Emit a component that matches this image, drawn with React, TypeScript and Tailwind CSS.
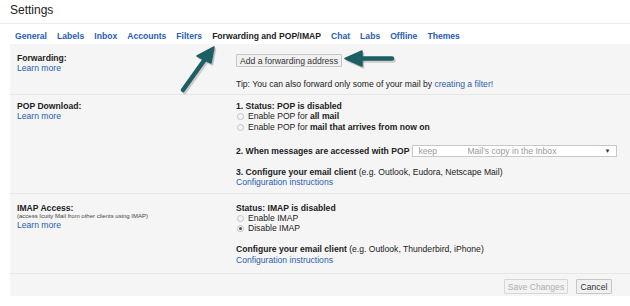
import React from "react";

const Radio = ({ checked = false }: { checked?: boolean }) => (
  <span className="inline-flex items-center justify-center w-[7px] h-[7px] rounded-full border border-[#c4c4c4] bg-[#f4f4f4] mr-[4px] ml-[1px] shrink-0">
    {checked && <span className="w-[3px] h-[3px] rounded-full bg-[#555]" />}
  </span>
);

const Link = ({ children }: { children: React.ReactNode }) => (
  <span className="text-[#2a5db0]">{children}</span>
);

export default function App() {
  const tabs = ["General", "Labels", "Inbox", "Accounts", "Filters", "Forwarding and POP/IMAP", "Chat", "Labs", "Offline", "Themes"];
  return (
    <div
      className="relative w-[630px] h-[306px] bg-white overflow-hidden text-[#222] text-[8.6px] leading-[10px]"
      style={{ fontFamily: '"Liberation Sans", Arial, sans-serif' }}
    >
      <div className="h-[24px] border-b border-[#ebebeb] pl-[10px] flex items-center">
        <span className="text-[12px] text-[#222] leading-[14px] -mt-[3px]">Settings</span>
      </div>
      <div className="flex h-[20px] items-end pb-[3px] pl-[10px] font-bold">
        {tabs.map((t) => (
          <span
            key={t}
            className={
              "px-[5px] " + (t === "Forwarding and POP/IMAP" ? "text-[#222]" : "text-[#2a5db0]")
            }
          >
            {t}
          </span>
        ))}
      </div>
      <div className="ml-[10px] bg-[#f5f5f5] flex flex-col">
        {/* Forwarding */}
        <div className="grid grid-cols-[219px_1fr] pl-[7px] pt-[9px] pb-[5px] border-b border-[#e6e6e6]">
          <div className="flex flex-col">
            <span className="font-bold">Forwarding:</span>
            <Link>Learn more</Link>
          </div>
          <div className="flex flex-col items-start">
            <span className="mt-[1px] h-[13px] px-[3px] border border-[#c6c6c6] bg-[#f1f1f1] text-[#333] flex items-center rounded-[1px]">
              Add a forwarding address
            </span>
            <span className="mt-[12px]">
              Tip: You can also forward only some of your mail by <Link>creating a filter!</Link>
            </span>
          </div>
        </div>
        {/* POP */}
        <div className="grid grid-cols-[219px_1fr] pl-[7px] pt-[6px] pb-[5px] border-b border-[#e6e6e6]">
          <div className="flex flex-col">
            <span className="font-bold">POP Download:</span>
            <Link>Learn more</Link>
          </div>
          <div className="flex flex-col items-start">
            <span className="font-bold">1. Status: POP is disabled</span>
            <span className="flex items-center h-[10px]">
              <Radio />
              Enable POP for&nbsp;<b>all mail</b>
            </span>
            <span className="flex items-center h-[12px]">
              <Radio />
              Enable POP for&nbsp;<b>mail that arrives from now on</b>
            </span>
            <div className="flex items-center mt-[12px] h-[12px]">
              <b>2. When messages are accessed with POP</b>
              <span className="ml-[3px] w-[205px] h-[12px] border border-[#c8c8c8] bg-white flex items-center text-[#9a9a9a] pl-[5px] pr-[6px]">
                <span className="w-[49px]">keep</span>
                <span className="flex-1">Mail's copy in the Inbox</span>
                <span className="text-[#333] text-[6px]">▼</span>
              </span>
            </div>
            <span className="mt-[10px]">
              <b>3. Configure your email client</b> (e.g. Outlook, Eudora, Netscape Mail)
            </span>
            <span className="leading-[11px]">
              <Link>Configuration instructions</Link>
            </span>
          </div>
        </div>
        {/* IMAP */}
        <div className="grid grid-cols-[219px_1fr] pl-[7px] pt-[9px] pb-[7px] border-b border-[#e6e6e6]">
          <div className="flex flex-col">
            <span className="font-bold">IMAP Access:</span>
            <span className="text-[6px] leading-[7px] text-[#444]">(access Icuity Mail from other clients using IMAP)</span>
            <Link>Learn more</Link>
          </div>
          <div className="flex flex-col items-start">
            <span className="font-bold">Status: IMAP is disabled</span>
            <span className="flex items-center h-[10px]">
              <Radio />
              Enable IMAP
            </span>
            <span className="flex items-center h-[10px]">
              <Radio checked />
              Disable IMAP
            </span>
            <span className="mt-[11px]">
              <b>Configure your email client</b> (e.g. Outlook, Thunderbird, iPhone)
            </span>
            <span className="leading-[12px]">
              <Link>Configuration instructions</Link>
            </span>
          </div>
        </div>
        {/* Buttons */}
        <div className="flex justify-end gap-[8px] pt-[5px] pb-[2px] pr-[18px]">
          <span className="h-[15px] w-[64px] flex items-center justify-center border border-[#d6d6d6] bg-[#f3f3f3] text-[#b0b0b0] rounded-[1px]">
            Save Changes
          </span>
          <span className="h-[15px] w-[36px] flex items-center justify-center border border-[#c6c6c6] bg-[#f1f1f1] text-[#333] rounded-[1px]">
            Cancel
          </span>
        </div>
      </div>

      <svg className="absolute inset-0 pointer-events-none" width="630" height="306" viewBox="0 0 630 306">
        <g stroke="#9a9a9a" strokeOpacity="0.45" fill="#9a9a9a" fillOpacity="0.45" strokeLinecap="round" strokeLinejoin="round" transform="translate(1.5,2)">
          <path d="M183 90 L208 55" strokeWidth="4.5" fill="none" />
          <path d="M214 47 L197 56 L211 63 Z" strokeWidth="1.5" />
          <path d="M392 58.5 L352 58.5" strokeWidth="4.5" fill="none" />
          <path d="M345 58.5 L362 51 L362 66 Z" strokeWidth="1.5" />
        </g>
        <g stroke="#1d5f62" fill="#1d5f62" strokeLinecap="round" strokeLinejoin="round">
          <path d="M183 90 L208 55" strokeWidth="4.5" fill="none" />
          <path d="M214 47 L197 56 L211 63 Z" strokeWidth="1.5" />
          <path d="M392 58.5 L352 58.5" strokeWidth="4.5" fill="none" />
          <path d="M345 58.5 L362 51 L362 66 Z" strokeWidth="1.5" />
        </g>
      </svg>
    </div>
  );
}
